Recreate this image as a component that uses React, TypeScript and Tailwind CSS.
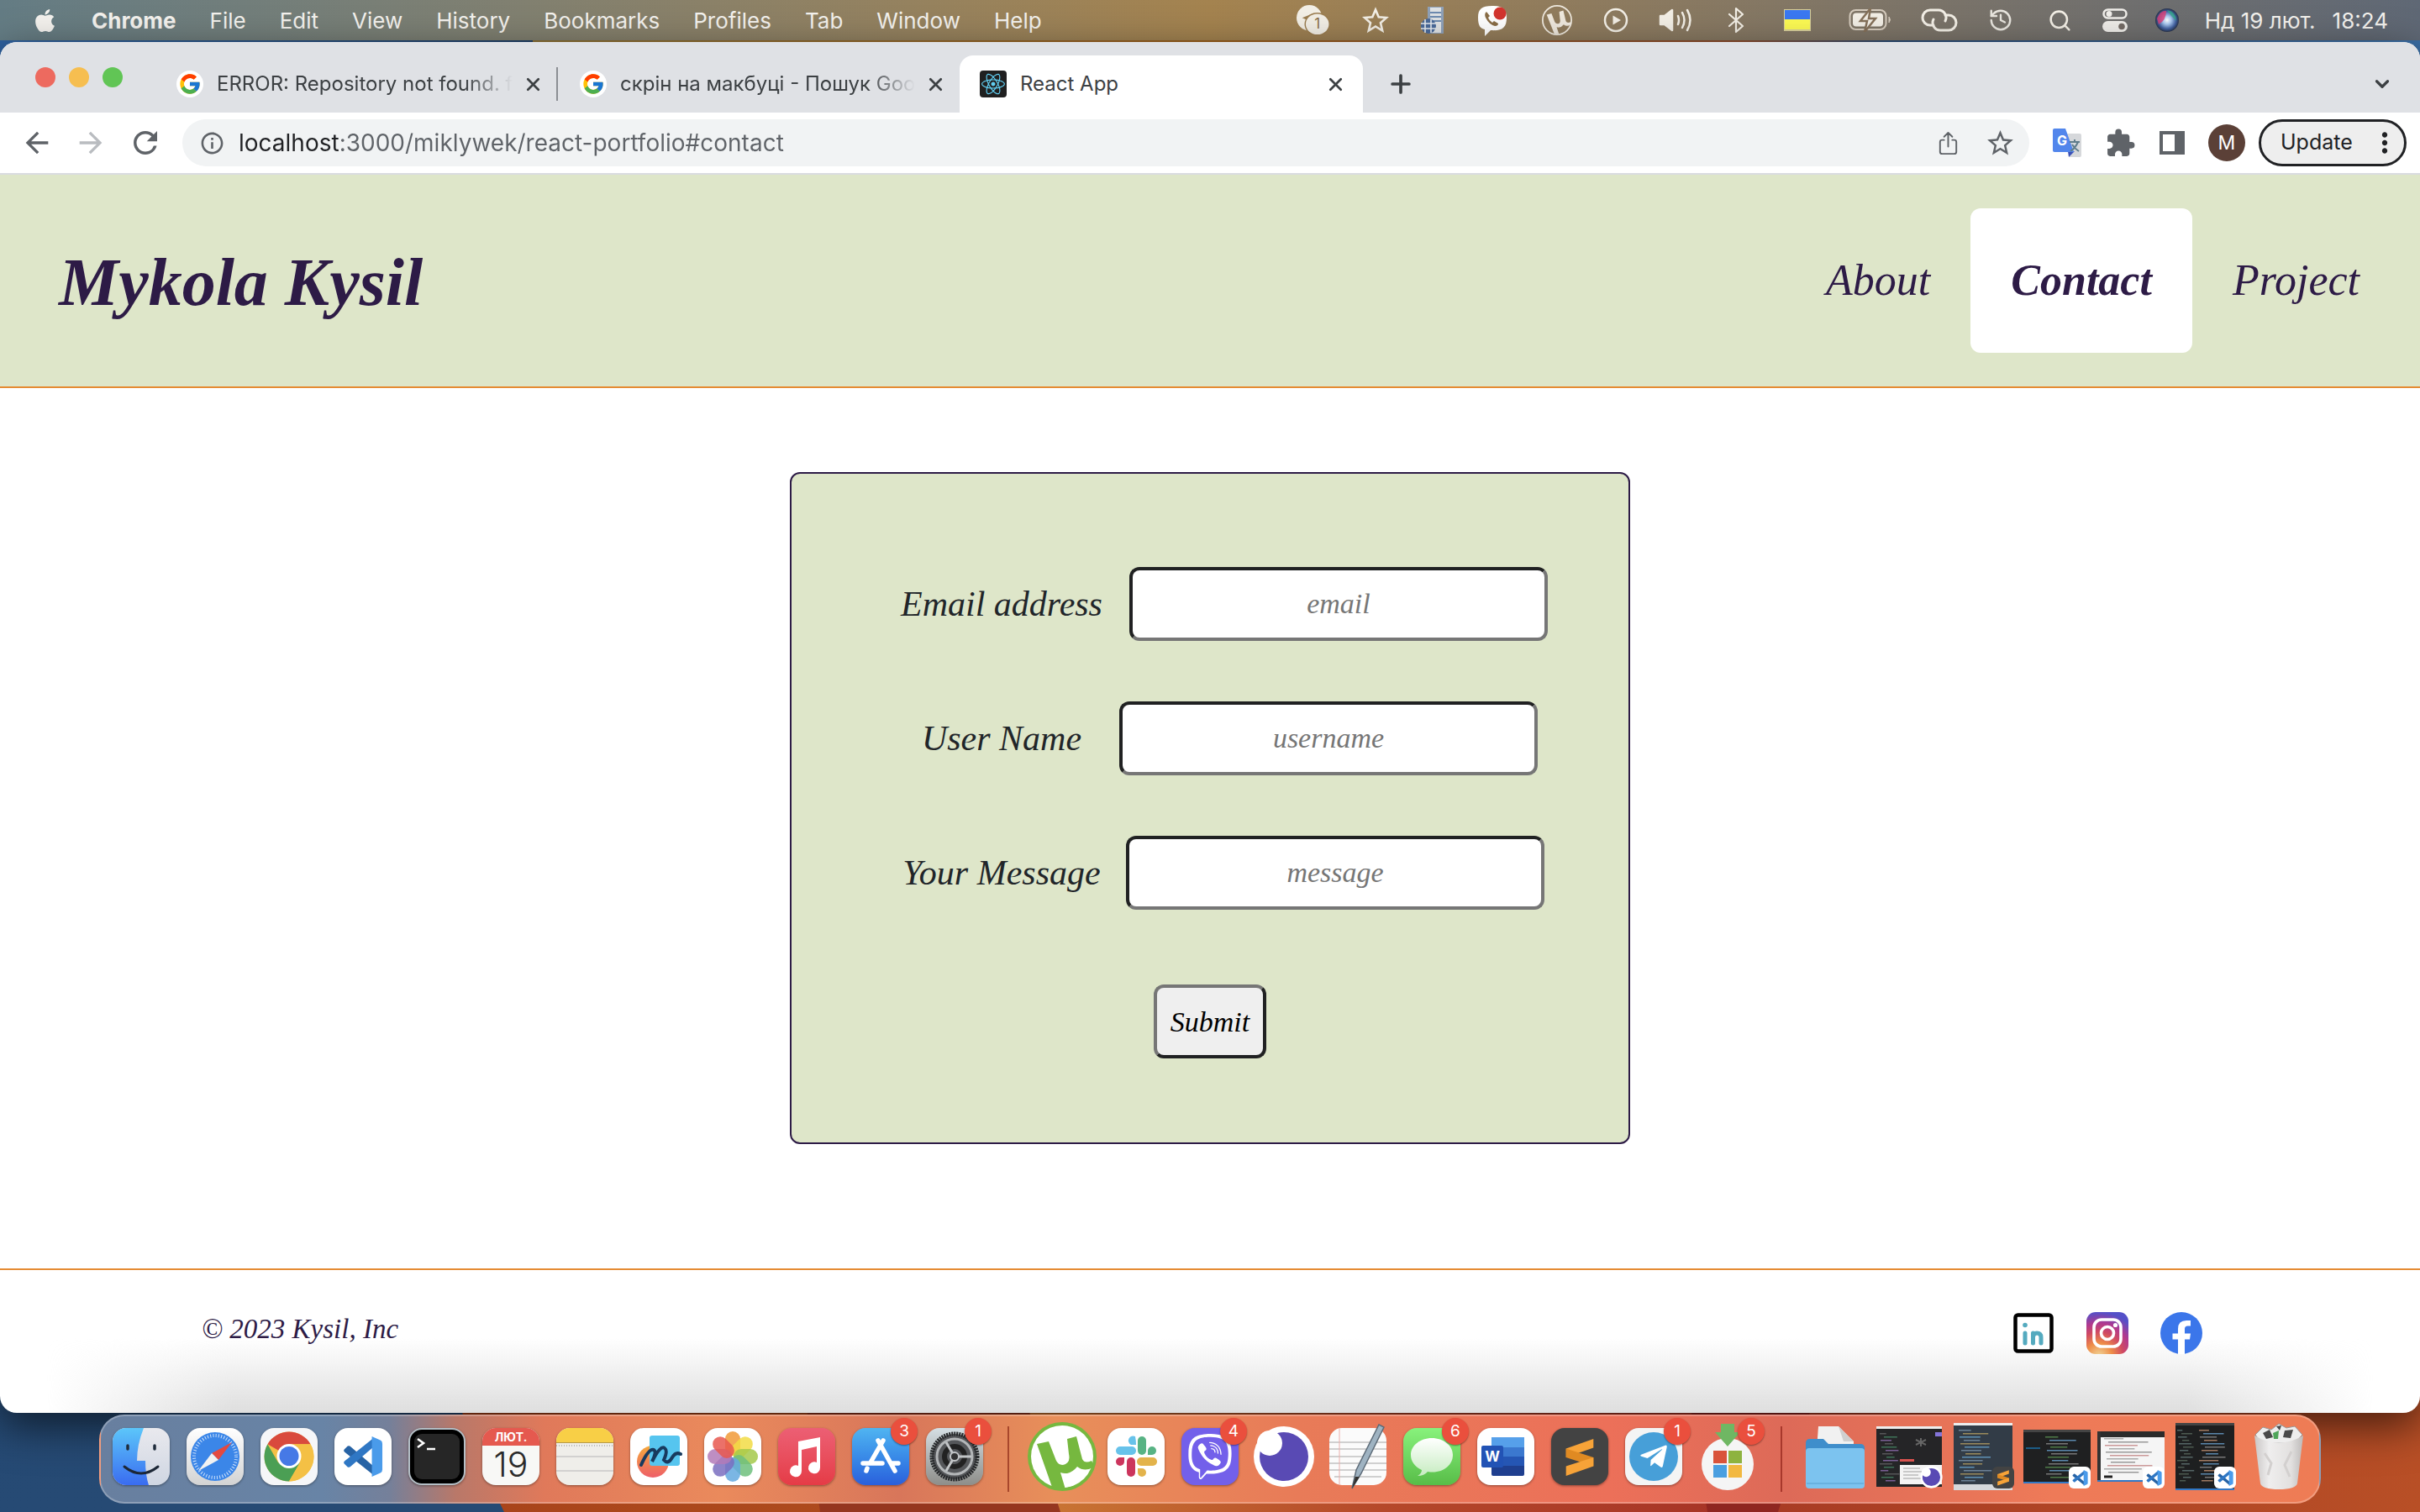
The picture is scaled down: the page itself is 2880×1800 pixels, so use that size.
import React from "react";
import { FaApple, FaViber, FaTelegramPlane, FaReact } from "react-icons/fa";
import { FcGoogle } from "react-icons/fc";
import { MdExtension, MdRefresh, MdStarOutline, MdOutlineArrowBack, MdOutlineArrowForward, MdInfoOutline, MdMoreVert } from "react-icons/md";
import { IoShareOutline } from "react-icons/io5";
import { History, Search, ChevronDown, Plus, X } from "lucide-react";

const menus = ["File", "Edit", "View", "History", "Bookmarks", "Profiles", "Tab", "Window", "Help"];

function Wallpaper() {
  return (
    <svg className="absolute inset-0 h-full w-full" viewBox="0 0 2880 1800" preserveAspectRatio="none" aria-hidden="true">
      <defs>
        <linearGradient id="wpTop" x1="0" x2="1" y1="0" y2="0">
          <stop offset="0" stopColor="#2f62a0" />
          <stop offset=".22" stopColor="#1f3f66" />
          <stop offset=".22" stopColor="#8a6f33" />
          <stop offset=".5" stopColor="#9a5e1c" />
          <stop offset=".72" stopColor="#8a4a2c" />
          <stop offset=".78" stopColor="#2b4a72" />
          <stop offset="1" stopColor="#3a6ea6" />
        </linearGradient>
        <linearGradient id="wpBlue" x1="0" x2="0" y1="0" y2="1">
          <stop offset="0" stopColor="#20466f" />
          <stop offset="1" stopColor="#264a74" />
        </linearGradient>
        <linearGradient id="wpA" x1="0" x2="1" y1="0" y2="0">
          <stop offset="0" stopColor="#a8431a" />
          <stop offset=".6" stopColor="#b95a24" />
          <stop offset="1" stopColor="#c8733a" />
        </linearGradient>
        <linearGradient id="wpB" x1="0" x2="1" y1="0" y2="0">
          <stop offset="0" stopColor="#cb7a34" />
          <stop offset=".5" stopColor="#b5482a" />
          <stop offset="1" stopColor="#a53226" />
        </linearGradient>
        <linearGradient id="wpC" x1="0" x2="1" y1="0" y2="0">
          <stop offset="0" stopColor="#a93c24" />
          <stop offset="1" stopColor="#b84f26" />
        </linearGradient>
      </defs>
      <rect width="2880" height="200" fill="url(#wpTop)" />
      <rect y="200" width="2880" height="1600" fill="url(#wpBlue)" />
      <path d="M520 1600H2880V1800H600Q570 1740 520 1600Z" fill="url(#wpA)" />
      <path d="M950 1600H1300V1800H976Z" fill="#95361f" />
      <path d="M1200 1600H2100V1800H1262Z" fill="url(#wpB)" />
      <path d="M2000 1600H2200V1800H2032Z" fill="#8f2620" />
      <path d="M2180 1600H2880V1800H2116Z" fill="url(#wpC)" />
    </svg>
  );
}

/* ---------- menu bar ---------- */

const glyph = "overflow-visible";

const statusIcons: { name: string; box: string; art: React.ReactNode }[] = [
  {
    name: "Telegram",
    box: "w-10",
    art: (
      <svg width="40" height="38" viewBox="0 0 42 40" className={glyph}>
        <circle cx="17" cy="17" r="16" fill="#f3efe6" />
        <path d="M8 17 23 11 20 25 15 20Z" fill="#9b7d50" />
        <ellipse cx="27" cy="25" rx="16" ry="14.500" fill="#9b7d50" />
        <ellipse cx="27" cy="25" rx="14.500" ry="13" fill="#f3efe6" />
        <text x="27" y="31" fontSize="18" textAnchor="middle" fill="#8b6f44">1</text>
      </svg>
    ),
  },
  {
    name: "Favourites",
    box: "w-[34px]",
    art: (
      <svg width="32" height="32" viewBox="0 0 32 32">
        <path d="M16 3.500 19.700 12.200 29 13 22 19.200 24.200 28.500 16 23.500 7.800 28.500 10 19.200 3 13 12.300 12.200Z" fill="none" stroke="#f3efe6" strokeWidth="2.600" />
      </svg>
    ),
  },
  {
    name: "Network",
    box: "w-[26px]",
    art: (
      <svg width="28" height="34" viewBox="0 0 28 34">
        <rect x="8" y="1" width="19" height="32" fill="#8fa1b8" />
        <rect x="11" y="2" width="13" height="30" fill="#dfe2e4" />
        <path d="M11 8H24M11 13H24M11 18H24" stroke="#6d8bb0" strokeWidth="2" />
        <circle cx="9" cy="24" r="9" fill="#4a6a9a" />
        <path d="M0 21H18M0 27H18M5 16V32M12 16V32" stroke="#e6ebf0" strokeWidth="1.600" />
      </svg>
    ),
  },
  {
    name: "Viber",
    box: "w-10",
    art: (
      <svg width="38" height="38" viewBox="0 0 38 38" className={glyph}>
        <path d="M19 2C6 2 2 6 2 16C2 26 5 29 10 30V38L17 31C31 32 36 28 36 16C36 6 31 2 19 2Z" fill="#fff" />
        <path d="M12 9Q9 11 11 16Q15 24 22 26Q26 26 26 23L21 20L19 22Q15 19 14 16L16 14Z" fill="#8a6d46" />
        <circle cx="28" cy="11" r="7.500" fill="#d3342e" />
      </svg>
    ),
  },
  {
    name: "Torrent client",
    box: "w-[38px]",
    art: (
      <svg width="36" height="36" viewBox="0 0 82 82">
        <circle cx="41" cy="41" r="39" fill="none" stroke="#efe9de" strokeWidth="4" />
        <path d="M13 26 26 23 35 46Q39 53 46 50Q51 47 49 38L47 18 58 15 65 44Q68 50 78 46V53Q68 60 59 53Q50 64 40 60L46 78 34 79Z" fill="#efe9de" />
      </svg>
    ),
  },
  {
    name: "Now playing",
    box: "w-[26px]",
    art: (
      <svg width="30" height="30" viewBox="0 0 30 30">
        <circle cx="15" cy="15" r="13" fill="none" stroke="#f3efe6" strokeWidth="2.500" />
        <path d="M11.500 9.500 21 15 11.500 20.500Z" fill="#f3efe6" />
      </svg>
    ),
  },
  {
    name: "Sound",
    box: "w-[42px]",
    art: (
      <svg width="42" height="30" viewBox="0 0 42 30" fill="none" stroke="#f3efe6" strokeWidth="2.500" strokeLinecap="round">
        <path d="M2 10H7L16 3V27L7 20H2Z" fill="#f3efe6" strokeLinejoin="round" />
        <path d="M23 10Q25 15 23 20M28 6Q33 15 28 24M34 3Q41 15 34 27" />
      </svg>
    ),
  },
  {
    name: "Bluetooth",
    box: "w-6",
    art: (
      <svg width="22" height="32" viewBox="0 0 22 32" fill="none" stroke="#f3efe6" strokeWidth="2.200" strokeLinejoin="round" strokeLinecap="round">
        <path d="M3 9 19 23 11 30V2L19 9 3 23" />
      </svg>
    ),
  },
  {
    name: "Ukrainian keyboard",
    box: "w-[46px]",
    art: (
      <svg width="32" height="26" viewBox="0 0 32 26">
        <rect width="32" height="26" fill="#d8cf9a" />
        <rect x="1" y="1" width="30" height="11" fill="#3a78f2" />
        <rect x="1" y="12" width="30" height="12" fill="#fdfb54" />
      </svg>
    ),
  },
  {
    name: "Battery charging",
    box: "w-[52px]",
    art: (
      <svg width="52" height="28" viewBox="0 0 52 28">
        <rect x="1.500" y="2" width="43" height="23" rx="7" fill="none" stroke="#d5cbbd" strokeWidth="2" />
        <path d="M48 10Q51 13.500 48 17Z" fill="#d5cbbd" stroke="#d5cbbd" />
        <rect x="5" y="5.500" width="36" height="16" rx="4" fill="#f3efe6" />
        <path d="M26 0 14 15H22L19 28 32 12H24Z" fill="#f3efe6" stroke="#85715a" strokeWidth="2.500" />
      </svg>
    ),
  },
  {
    name: "Connection",
    box: "w-9",
    art: (
      <svg width="44" height="28" viewBox="0 0 44 28" fill="none" stroke="#f3efe6" strokeWidth="3" strokeLinecap="round">
        <path d="M15 20H11A9 9 0 0 1 11 2H21A9 9 0 0 1 29 15" />
        <path d="M29 8H33A9 9 0 0 1 33 26H23A9 9 0 0 1 15 13" />
      </svg>
    ),
  },
  { name: "Time Machine", box: "w-[34px]", art: <History size={30} strokeWidth={1.9} color="#e9e6df" /> },
  { name: "Spotlight", box: "w-8", art: <Search size={29} strokeWidth={2.1} color="#f3efe6" /> },
  {
    name: "Control Centre",
    box: "w-[22px]",
    art: (
      <svg width="30" height="28" viewBox="0 0 30 28">
        <rect x="1.500" y="1.500" width="27" height="10" rx="5" fill="none" stroke="#f0eeea" strokeWidth="2.500" />
        <circle cx="8" cy="6.500" r="3.500" fill="#f0eeea" />
        <rect y="15" width="30" height="13" rx="6.500" fill="#f0eeea" />
        <circle cx="23" cy="21.500" r="3.800" fill="#756c66" />
      </svg>
    ),
  },
  {
    name: "Siri",
    box: "w-[26px]",
    art: (
      <svg width="28" height="28" viewBox="0 0 28 28">
        <defs>
          <radialGradient id="siri">
            <stop offset="0" stopColor="#fff" />
            <stop offset=".35" stopColor="#a9c8f0" />
            <stop offset=".75" stopColor="#41609f" />
            <stop offset="1" stopColor="#28324a" />
          </radialGradient>
        </defs>
        <circle cx="14" cy="14" r="14" fill="url(#siri)" />
        <path d="M2 12Q6 2 13 3Q13 14 4 19Z" fill="#dc3c76" opacity=".8" />
        <path d="M14 2Q25 4 25 15Q19 10 14 2Z" fill="#2fae86" opacity=".7" />
      </svg>
    ),
  },
];

function MenuBar() {
  return (
    <header className="relative mb-0.5 flex h-12 items-center justify-between bg-linear-to-r from-[#647c84] via-[#a4834f] to-[#5f6875] pr-[38px] pl-[38px] text-[26px] text-[#f4f2ee] [text-shadow:0_2px_4px_rgba(0,0,0,.3)]">
      <nav aria-label="Application menu" className="flex items-center gap-10">
        <button aria-label="Apple menu">
          <FaApple size={31} />
        </button>
        <button className="font-bold">Chrome</button>
        {menus.map((m) => (
          <button key={m}>{m}</button>
        ))}
      </nav>
      <div className="flex items-center">
        <div className="flex items-center gap-[38px]">
          {statusIcons.map((s) => (
            <button key={s.name} aria-label={s.name} className={`flex shrink-0 items-center justify-center ${s.box}`}>
              <span className="shrink-0">{s.art}</span>
            </button>
          ))}
        </div>
        <button className="ml-8 flex gap-5 whitespace-nowrap">
          <span>Нд 19 лют.</span>
          <span>18:24</span>
        </button>
      </div>
    </header>
  );
}

/* ---------- browser chrome ---------- */

function GoogleMark() {
  return (
    <span className="flex size-8 shrink-0 items-center justify-center rounded-full bg-white">
      <FcGoogle size={28} />
    </span>
  );
}

function InactiveTab({ title }: { title: string }) {
  return (
    <div className="flex w-[478px] items-center pr-4 pl-[26px]">
      <GoogleMark />
      <button role="tab" aria-selected="false" className="ml-4 flex-1 text-left whitespace-nowrap [mask-image:linear-gradient(90deg,#000_84%,transparent)]">
        {title}
      </button>
      <button aria-label={`Close ${title}`} className="ml-3">
        <X size={25} strokeWidth={2.6} />
      </button>
    </div>
  );
}

function TabStrip() {
  return (
    <div className="flex h-[84px] items-end bg-[#dfe1e5] text-[24px] text-[#3c4043]">
      <div className="flex h-[84px] items-center gap-4 pl-[42px]">
        <button aria-label="Close window" className="size-6 rounded-full bg-[#ed6a5f]" />
        <button aria-label="Minimise window" className="size-6 rounded-full bg-[#f6be50]" />
        <button aria-label="Full screen" className="size-6 rounded-full bg-[#61c555]" />
      </div>
      <div role="tablist" className="flex h-[68px] flex-1 items-stretch pl-[38px]">
        <InactiveTab title="ERROR: Repository not found. f" />
        <span className="my-auto h-10 w-0.5 bg-[#8b8e93]" />
        <InactiveTab title="скрін на макбуці - Пошук Goo" />
        <div className="flex w-[480px] items-center rounded-t-2xl bg-white pr-5 pl-6">
          <span className="flex size-8 items-center justify-center rounded bg-[#202020]">
            <FaReact size={28} color="#61cdf0" />
          </span>
          <button role="tab" aria-selected="true" className="ml-4 flex-1 text-left">React App</button>
          <button aria-label="Close React App">
            <X size={25} strokeWidth={2.6} />
          </button>
        </div>
        <button aria-label="New tab" className="ml-7">
          <Plus size={34} strokeWidth={2.6} />
        </button>
      </div>
      <button aria-label="Search tabs" className="mr-8 flex h-[68px] items-center">
        <ChevronDown size={26} strokeWidth={3} />
      </button>
    </div>
  );
}

function Toolbar() {
  return (
    <div className="flex h-[74px] items-center border-b-2 border-[#dadce0] bg-white pr-4 pl-6 text-[#5f6368]">
      <div className="flex items-center gap-6">
        <button aria-label="Back"><MdOutlineArrowBack size={40} /></button>
        <button aria-label="Forward" className="text-[#b9bcc0]"><MdOutlineArrowForward size={40} /></button>
        <button aria-label="Reload"><MdRefresh size={42} /></button>
      </div>
      <div className="ml-[23px] flex h-14 flex-1 items-center rounded-full bg-[#f1f3f4] pr-4 pl-5">
        <MdInfoOutline size={31} />
        <input
          aria-label="Address"
          defaultValue="localhost:3000/miklywek/react-portfolio#contact"
          className="ml-4 min-w-0 flex-1 bg-[linear-gradient(90deg,#202124_121px,#5f6368_121px)] bg-clip-text text-[28px] text-transparent outline-none"
        />
        <button aria-label="Share"><IoShareOutline size={31} /></button>
        <button aria-label="Bookmark this page" className="ml-7"><MdStarOutline size={37} /></button>
      </div>
      <div className="ml-7 flex items-center gap-7">
        <button aria-label="Translate">
          <svg width="34" height="34" viewBox="0 0 34 34">
            <path d="M12 6H32Q34 6 34 8V32Q34 34 32 34H20Z" fill="#d6d8db" />
            <path d="M18 27H26L19 34Z" fill="#3b51b8" />
            <path d="M2 0H15L25 28H2Q0 28 0 26V2Q0 0 2 0Z" fill="#5286ec" />
            <text x="5" y="20" fontSize="16" fontWeight="700" fill="#fff">G</text>
            <path d="M20 16H32M26 13V16M30 16Q27 23 21 27M23 19Q26 24 31 27" fill="none" stroke="#5f7d8c" strokeWidth="2" />
          </svg>
        </button>
        <button aria-label="Extensions"><MdExtension size={37} /></button>
        <button aria-label="Side panel">
          <svg width="30" height="28" viewBox="0 0 30 28">
            <path d="M0 0H30V28H0ZM4 4V24H18V4Z" fill="#5f6368" fillRule="evenodd" />
          </svg>
        </button>
        <button aria-label="Profile" className="flex size-11 items-center justify-center rounded-full bg-[#5b4037] text-[23px] text-white">M</button>
      </div>
      <button className="ml-4 flex h-14 w-44 items-center justify-between rounded-full border-[3px] border-[#202124] bg-[#eeeeee] pr-1 pl-[23px] text-[25px] text-[#202124]">
        Update
        <MdMoreVert size={38} />
      </button>
    </div>
  );
}

/* ---------- page ---------- */

function PageHeader() {
  return (
    <header className="flex items-center justify-between border-b-2 border-[#e58b33] bg-[#dee6c9] px-6 py-10 text-[#2d1b46]">
      <h1 className="pt-1 pl-[46px] text-[80px] leading-none font-bold">Mykola Kysil</h1>
      <nav className="flex items-center text-[52px] leading-[76px]">
        <a href="#about" className="rounded-xl p-12">About</a>
        <a href="#contact" className="rounded-xl bg-white p-12 font-bold">Contact</a>
        <a href="#project" className="rounded-xl p-12">Project</a>
      </nav>
    </header>
  );
}

const fields = [
  { id: "email", label: "Email address", hint: "email", gap: "ml-8" },
  { id: "username", label: "User Name", hint: "username", gap: "ml-5" },
  { id: "message", label: "Your Message", hint: "message", gap: "ml-7" },
];

function ContactForm() {
  return (
    <form className="mx-auto mt-[100px] flex h-[800px] w-[1000px] flex-col rounded-xl border-2 border-[#2d1b46] bg-[#dee6c9] pt-[111px] pl-[130px]" onSubmit={(e) => e.preventDefault()}>
      <div className="flex flex-col gap-[72px]">
        {fields.map((f) => (
          <div key={f.id} className="flex items-center">
            <label htmlFor={f.id} className="w-60 text-center text-[42px] leading-none whitespace-nowrap text-[#212529]">{f.label}</label>
            <input
              id={f.id}
              placeholder={f.hint}
              className={`h-[88px] w-[498px] rounded-xl border-4 border-t-[#202122] border-r-[#767676] border-b-[#767676] border-l-[#202122] bg-white text-center text-[34px] italic placeholder:text-[#767676] ${f.gap}`}
            />
          </div>
        ))}
      </div>
      <button className="mt-[89px] mr-[130px] h-[88px] self-center rounded-xl border-4 border-t-[#767676] border-r-[#202122] border-b-[#202122] border-l-[#767676] bg-[#efefef] px-4 text-[34px] text-black italic">
        Submit
      </button>
    </form>
  );
}

function PageFooter() {
  return (
    <footer className="relative border-t-2 border-[#e58b33] text-[#2d1b46]">
      <div className="absolute inset-x-14 bottom-0 h-[90px] bg-linear-to-t from-[#dedede] to-transparent [mask-image:linear-gradient(90deg,transparent,#000_8%,#000_92%,transparent)]" />
      <div className="relative flex h-[170px] items-start justify-between pt-[50px] pr-[259px] pl-[240px]">
        <p className="text-[33px] leading-10">© 2023 Kysil, Inc</p>
        <div className="flex items-center gap-[38px]">
          <a href="#linkedin" aria-label="LinkedIn">
            <svg width="50" height="50" viewBox="0 0 50 50">
              <rect x="3.500" y="3.500" width="43" height="43" rx="3" fill="#fff" stroke="#000" strokeWidth="4.500" />
              <g stroke="#54aabf" strokeWidth="5" strokeLinecap="round" fill="none">
                <path d="M15 25V37M24.500 25V37M24.500 30Q24.500 25 29 25Q34 25 34 30V37" />
              </g>
              <circle cx="15" cy="15.500" r="2.800" fill="#54aabf" />
            </svg>
          </a>
          <a href="#instagram" aria-label="Instagram">
            <svg width="50" height="50" viewBox="0 0 50 50">
              <defs>
                <radialGradient id="ig" cx=".3" cy="1.050" r="1.050">
                  <stop offset="0" stopColor="#f0d79a" />
                  <stop offset=".3" stopColor="#ee8d48" />
                  <stop offset=".55" stopColor="#d04a62" />
                  <stop offset=".75" stopColor="#b0398f" />
                  <stop offset="1" stopColor="#5450c8" />
                </radialGradient>
              </defs>
              <rect width="50" height="50" rx="11" fill="url(#ig)" />
              <rect x="9" y="9" width="32" height="32" rx="9" fill="none" stroke="#fff" strokeWidth="3.600" />
              <circle cx="25" cy="25" r="7.500" fill="none" stroke="#fff" strokeWidth="3.600" />
              <circle cx="34.500" cy="15.500" r="2.600" fill="#fff" />
            </svg>
          </a>
          <a href="#facebook" aria-label="Facebook">
            <svg width="50" height="50" viewBox="0 0 50 50">
              <circle cx="25" cy="25" r="25" fill="#3b76ea" />
              <path d="M21 50V32.500H14.500V25.500H21V20Q21 10 31 10H36V16.500H32.500Q29 16.500 29 20V25.500H36L35 32.500H29V50Q25 50.500 21 50Z" fill="#fff" />
            </svg>
          </a>
        </div>
      </div>
    </footer>
  );
}

/* ---------- dock ---------- */

function Tile({ className = "", children }: { className?: string; children?: React.ReactNode }) {
  return <span className={`flex size-[68px] items-center justify-center overflow-hidden rounded-2xl shadow-[0_1px_3px_rgba(0,0,0,.4)] ${className}`}>{children}</span>;
}

const art = { width: 68, height: 68, viewBox: "0 0 68 68" };

function CodeMark({ size }: { size: number }) {
  return (
    <svg width={size} height={size} viewBox="0 0 50 50">
      <path d="M2 17 6 13Q8 12 10 14L38 38V49L3 21Q0 19 2 17Z" fill="#2763a5" transform="translate(0 -1)" />
      <path d="M2 33 6 37Q8 38 10 36L38 12V1L3 29Q0 31 2 33Z" fill="#2f77c4" transform="translate(0 1)" />
      <path d="M36 0 47 5Q49 6 49 9V41Q49 44 47 45L36 50Z" fill="#4a9bea" />
    </svg>
  );
}

function SublimeMark({ size }: { size: number }) {
  return (
    <svg width={size} height={size} viewBox="0 0 50 50">
      <path d="M8 15 42 3V14L8 26Z" fill="#f7a338" />
      <path d="M8 15V26L42 37V26Z" fill="#e08a22" />
      <path d="M8 37 42 26V37L8 49Z" fill="#f7a338" />
    </svg>
  );
}

function InsomniaMark({ size }: { size: number }) {
  return (
    <svg width={size} height={size} viewBox="0 0 74 74">
      <circle cx="37" cy="37" r="36" fill="#fff" />
      <circle cx="37" cy="37" r="29" fill="#594ab4" />
      <circle cx="20" cy="21" r="15" fill="#fff" />
    </svg>
  );
}

function Lines({ colors, count, x, w }: { colors: string[]; count: number; x: number; w: number }) {
  return (
    <>
      {Array.from({ length: count }, (_, i) => (
        <rect key={i} x={x + ((i * 5) % 9)} y={8 + i * 4} width={w * (0.35 + ((i * 37) % 50) / 100)} height="1.500" fill={colors[i % colors.length]} />
      ))}
    </>
  );
}

const dockApps: { name: string; badge?: number; art: React.ReactNode }[] = [
  {
    name: "Finder",
    art: (
      <Tile className="bg-linear-to-b from-[#e9e9ee] to-[#cfd6e2]">
        <svg {...art}>
          <defs>
            <linearGradient id="fin" x1="0" x2="0" y1="0" y2="1">
              <stop offset="0" stopColor="#5cc6fa" />
              <stop offset="1" stopColor="#3a6cf0" />
            </linearGradient>
          </defs>
          <path d="M0 0H37Q29 20 29 39H39Q39 56 43 68H0Z" fill="url(#fin)" />
          <path d="M18 21V25M50 21V25" stroke="#1f2c3c" strokeWidth="3.500" strokeLinecap="round" />
          <path d="M14 46Q34 62 54 46" fill="none" stroke="#1c2736" strokeWidth="3" strokeLinecap="round" />
        </svg>
      </Tile>
    ),
  },
  {
    name: "Safari",
    art: (
      <Tile className="bg-linear-to-b from-white to-[#d3d3d3]">
        <svg {...art}>
          <circle cx="34" cy="34" r="29" fill="#3b86e8" />
          <circle cx="34" cy="34" r="25" fill="none" stroke="#cfe2fb" strokeWidth="4" strokeDasharray="1 2.270" />
          <path d="M54 17 38 38 30 30Z" fill="#e4493f" />
          <path d="M14 51 30 30 38 38Z" fill="#f2f2f2" />
        </svg>
      </Tile>
    ),
  },
  {
    name: "Chrome",
    art: (
      <Tile className="bg-[#f5f6f8]">
        <svg {...art}>
          <circle cx="34" cy="34" r="29.500" fill="#f4c045" />
          <path d="M34 34 8.500 19.200A29.500 29.500 0 0 1 59.500 19.200H34Z" fill="#d94a3d" />
          <path d="M8.500 19.200A29.500 29.500 0 0 0 34 63.500L46.800 41.400 34 34 21.200 41.400Z" fill="#4b9f54" />
          <path d="M59.500 19.200H34V34L46.800 41.400 34 63.500A29.500 29.500 0 0 0 59.500 19.200Z" fill="#f4c045" />
          <circle cx="34" cy="33.500" r="14.500" fill="#fff" />
          <circle cx="34" cy="33.500" r="11.500" fill="#4679e6" />
        </svg>
      </Tile>
    ),
  },
  { name: "Visual Studio Code", art: <Tile className="bg-white"><CodeMark size={48} /></Tile> },
  {
    name: "Terminal",
    art: (
      <Tile className="border-2 border-[#b4bfc6] bg-black">
        <svg {...art} className="shrink-0">
          <rect x="7" y="7" width="54" height="54" rx="9" fill="#262626" />
          <path d="M11 13 18 18 11 23M22 25H32" fill="none" stroke="#fff" strokeWidth="2.600" />
        </svg>
      </Tile>
    ),
  },
  {
    name: "Calendar",
    art: (
      <Tile className="flex-col justify-start bg-[#f8f8f6]">
        <span className="w-full bg-[#e5594f] text-center text-[14px] leading-[21px] font-bold text-white">ЛЮТ.</span>
        <span className="text-[41px] leading-[44px] font-light text-[#2b2b2b]">19</span>
      </Tile>
    ),
  },
  {
    name: "Notes",
    art: (
      <Tile>
        <svg {...art}>
          <rect width="68" height="68" fill="#efeeea" />
          <rect width="68" height="17" fill="#f8cf46" />
          <path d="M0 17.500H68" stroke="#b59a4a" />
          <path d="M0 21H68" stroke="#bbb" strokeWidth="2" strokeDasharray="1 2" />
          <path d="M0 34H68M0 51H68" stroke="#d2d1d0" strokeWidth="2" />
        </svg>
      </Tile>
    ),
  },
  {
    name: "Freeform",
    art: (
      <Tile className="bg-white">
        <svg {...art}>
          <defs>
            <linearGradient id="ff" x1="0" x2="0" y1="0" y2="1">
              <stop offset="0" stopColor="#f5a93c" />
              <stop offset="1" stopColor="#ee5f68" />
            </linearGradient>
          </defs>
          <circle cx="27" cy="40" r="19" fill="url(#ff)" />
          <rect x="23" y="9" width="36" height="36" rx="3" fill="#56c5ef" />
          <path d="M13 44Q22 24 28 26Q32 28 26 40Q36 20 41 24Q45 27 40 38Q45 44 50 35Q54 28 60 31" fill="none" stroke="#183a5e" strokeWidth="4" strokeLinecap="round" />
        </svg>
      </Tile>
    ),
  },
  {
    name: "Photos",
    art: (
      <Tile className="bg-white">
        <svg {...art}>
          {["#f19a37", "#f2dc45", "#a4c94a", "#6fbf7c", "#64a9df", "#7a6fc0", "#b37ab8", "#e8584f"].map((c, i) => (
            <rect key={c} x="25" y="4" width="18" height="29" rx="9" fill={c} opacity=".85" transform={`rotate(${i * 45} 34 34)`} />
          ))}
        </svg>
      </Tile>
    ),
  },
  {
    name: "Music",
    art: (
      <Tile className="bg-linear-to-b from-[#ec5f74] to-[#e53b46]">
        <svg {...art} fill="#fff">
          <path d="M24 16 50 11V47A7 7 0 1 1 46 41V22L28 26V51A7 7 0 1 1 24 45Z" />
        </svg>
      </Tile>
    ),
  },
  {
    name: "App Store",
    badge: 3,
    art: (
      <Tile className="bg-linear-to-b from-[#50b4f1] to-[#2b5fdc]">
        <svg {...art} fill="none" stroke="#fff" strokeWidth="5.500" strokeLinecap="round">
          <path d="M37 15 22 41M31 15 51 51M13 42H36M47 42H55M18 48 17 51" />
        </svg>
      </Tile>
    ),
  },
  {
    name: "System Settings",
    badge: 1,
    art: (
      <Tile className="bg-linear-to-b from-[#d5dfe4] to-[#8e8e8a]">
        <svg {...art} fill="none">
          <circle cx="34" cy="34" r="27" fill="#55575a" stroke="#26282a" strokeWidth="5" strokeDasharray="2 1" />
          <circle cx="34" cy="34" r="21" stroke="#b3b6b8" strokeWidth="3" />
          <circle cx="34" cy="34" r="12" stroke="#222" strokeWidth="6" />
          <path d="M34 34H54M34 34 24 17M34 34 24 51" stroke="#c2c5c7" strokeWidth="3" />
          <circle cx="34" cy="34" r="5" fill="#333" stroke="#c2c5c7" strokeWidth="2" />
        </svg>
      </Tile>
    ),
  },
];

const dockUserApps: { name: string; badge?: number; art: React.ReactNode }[] = [
  {
    name: "Torrent",
    art: (
      <svg width="82" height="82" viewBox="0 0 82 82">
        <defs>
          <clipPath id="utc"><circle cx="41" cy="41" r="38" /></clipPath>
        </defs>
        <circle cx="41" cy="41" r="41" fill="#76b83f" />
        <circle cx="41" cy="41" r="37" fill="#fff" />
        <g clipPath="url(#utc)" fill="#76b83f">
          <path d="M11 26 25 23 34 46Q38 53 45 50Q51 47 49 38L47 20 58 17 65 44Q68 50 76 46L80 53Q68 60 59 53Q50 64 39 60L45 80H30Z" />
        </g>
      </svg>
    ),
  },
  {
    name: "Slack",
    art: (
      <Tile className="bg-white">
        <svg {...art}>
          <g fill="#67c2ea"><rect x="10" y="22" width="24" height="10" rx="5" /><path d="M34 20H28A5 5 0 1 1 33 10Q34 15 34 20Z" /></g>
          <g fill="#58b384"><rect x="36" y="10" width="10" height="22" rx="5" /><path d="M48 32V27A5 5 0 1 1 53 32Z" /></g>
          <g fill="#e3b34b"><rect x="35" y="35" width="24" height="10" rx="5" /><path d="M36 48H41A5 5 0 1 1 36 53Z" /></g>
          <g fill="#cc355d"><rect x="23" y="35" width="10" height="23" rx="5" /><path d="M20 35V40A5 5 0 1 1 15 35Z" /></g>
        </svg>
      </Tile>
    ),
  },
  { name: "Viber", badge: 4, art: <Tile className="bg-[#7360ea]"><FaViber size={54} color="#fff" /></Tile> },
  { name: "Insomnia", art: <InsomniaMark size={74} /> },
  {
    name: "TextEdit",
    art: (
      <svg width="68" height="84" viewBox="0 0 68 84">
        <rect y="8" width="68" height="68" rx="15" fill="#fbfbfb" />
        <path d="M0 25H68M0 33H68M0 42H68M0 50H68M0 58H68M6 66H62" stroke="#c2c2c2" strokeWidth="1.500" />
        <path d="M12 8V76" stroke="#ecb0ac" />
        <path d="M59 4 65 7 38 62 27 80 32 58Z" fill="#9fb3c2" stroke="#5d6b78" strokeWidth="1.500" />
        <path d="M31 66 36 66 27 80Z" fill="#33312f" />
      </svg>
    ),
  },
  {
    name: "Messages",
    badge: 6,
    art: (
      <Tile className="bg-linear-to-b from-[#88f27c] to-[#58bd48]">
        <svg {...art}>
          <defs>
            <linearGradient id="msg" x1="0" x2="0" y1="0" y2="1">
              <stop offset="0" stopColor="#fff" />
              <stop offset="1" stopColor="#c6ecc0" />
            </linearGradient>
          </defs>
          <path d="M34 12C20 12 9 21 9 32C9 40 14 46 22 50Q22 54 17 57Q25 57 29 52C46 55 59 45 59 32C59 21 48 12 34 12Z" fill="url(#msg)" />
        </svg>
      </Tile>
    ),
  },
  {
    name: "Word",
    art: (
      <Tile className="bg-white">
        <svg {...art}>
          <rect x="17" y="11" width="39" height="46" rx="2" fill="#1f3f8f" />
          <rect x="17" y="11" width="39" height="12" fill="#56a0ea" />
          <rect x="17" y="23" width="39" height="11" fill="#3b78cf" />
          <rect x="17" y="34" width="39" height="11" fill="#2556b4" />
          <rect x="5" y="21" width="26" height="26" rx="2" fill="#2253b5" />
          <text x="18" y="40" textAnchor="middle" fontSize="17" fontWeight="700" fill="#fff">W</text>
        </svg>
      </Tile>
    ),
  },
  { name: "Sublime Text", art: <Tile className="bg-[#434343]"><SublimeMark size={48} /></Tile> },
  {
    name: "Telegram",
    badge: 1,
    art: (
      <Tile className="bg-[#f4f4f4]">
        <span className="flex size-[58px] items-center justify-center rounded-full bg-[#479fd8]">
          <FaTelegramPlane size={36} color="#fff" />
        </span>
      </Tile>
    ),
  },
  {
    name: "Microsoft installer",
    badge: 5,
    art: (
      <svg width="64" height="82" viewBox="0 0 64 82">
        <circle cx="32" cy="50" r="31" fill="#f5f5f5" />
        <rect x="15" y="34" width="16" height="15" fill="#d9533a" />
        <rect x="33" y="34" width="16" height="15" fill="#8eb33f" />
        <rect x="15" y="51" width="16" height="15" fill="#4a9fe0" />
        <rect x="33" y="51" width="16" height="15" fill="#f2b840" />
        <path d="M24 2H40V12H47L32 29 17 12H24Z" fill="#6fb763" />
      </svg>
    ),
  },
];

const dockWindows: { name: string; art: React.ReactNode }[] = [
  {
    name: "Documents",
    art: (
      <svg width="72" height="76" viewBox="0 0 72 76">
        <path d="M16 2H40L58 20V30H14Z" fill="#f1f1f1" />
        <path d="M40 2 58 20H46Z" fill="#cfcfcf" />
        <path d="M1 22Q1 17 6 17H22L28 23H66Q71 23 71 28V40H1Z" fill="#3f8ecb" />
        <rect x="1" y="28" width="70" height="48" rx="4" fill="#7cc3ef" />
        <path d="M2 70H70" stroke="#69b1df" strokeWidth="2" />
      </svg>
    ),
  },
  {
    name: "Insomnia window",
    art: (
      <span className="relative block">
        <svg width="78" height="72" viewBox="0 0 78 72">
          <rect width="78" height="72" fill="#252527" />
          <rect width="78" height="3" fill="#eee" />
          <Lines colors={["#565658", "#3f7358", "#7a5f95"]} count={15} x={4} w={22} />
          <path d="M53 14V24M47 16 59 22M47 22 59 16" stroke="#666" strokeWidth="2" />
          <rect x="28" y="39" width="17" height="3" fill="#d9534f" />
          <rect x="70" y="7" width="8" height="5" fill="#8374d8" />
          <rect x="28" y="46" width="50" height="23" fill="#f4f4f4" />
          <path d="M32 50H52M32 54H56M32 58H50M32 62H54" stroke="#bbb" strokeWidth="1.500" />
        </svg>
        <span className="absolute -right-px -bottom-0.5"><InsomniaMark size={27} /></span>
      </span>
    ),
  },
  {
    name: "Sublime window",
    art: (
      <span className="relative block">
        <svg width="70" height="80" viewBox="0 0 70 80">
          <rect width="70" height="80" fill="#323c47" />
          <rect width="70" height="3" fill="#eee" />
          <rect y="73" width="70" height="7" fill="#d5d8db" />
          <Lines colors={["#6c8196", "#9a8a5c", "#5f91b5"]} count={16} x={6} w={42} />
        </svg>
        <span className="absolute -right-0.5 bottom-0.5 flex size-[26px] items-center justify-center rounded-md bg-[#434343]"><SublimeMark size={20} /></span>
      </span>
    ),
  },
  {
    name: "Code window",
    art: (
      <span className="relative block">
        <svg width="80" height="64" viewBox="0 0 80 64">
          <rect width="80" height="64" fill="#1f2021" />
          <rect width="80" height="3" fill="#444" />
          <rect y="62" width="80" height="2" fill="#3178c6" />
          <path d="M3 22H20" stroke="#1c5c86" strokeWidth="2" />
          <Lines colors={["#4f7a48", "#5a87ac", "#777"]} count={13} x={26} w={44} />
        </svg>
        <span className="absolute right-0 -bottom-1.5 flex size-[26px] items-center justify-center rounded-md bg-white"><CodeMark size={19} /></span>
      </span>
    ),
  },
  {
    name: "Code document",
    art: (
      <span className="relative block">
        <svg width="80" height="60" viewBox="0 0 80 60">
          <rect width="80" height="60" fill="#f5f5f5" />
          <rect width="80" height="7" fill="#2b2b2b" />
          <rect width="4" height="60" fill="#333" />
          <rect y="58" width="80" height="2" fill="#3178c6" />
          <Lines colors={["#aaa", "#999", "#c99"]} count={11} x={8} w={66} />
          <path d="M8 54H18" stroke="#222" strokeWidth="3" />
        </svg>
        <span className="absolute right-0 -bottom-2 flex size-[26px] items-center justify-center rounded-md bg-white"><CodeMark size={19} /></span>
      </span>
    ),
  },
  {
    name: "Second code window",
    art: (
      <span className="relative block">
        <svg width="70" height="80" viewBox="0 0 70 80">
          <rect width="70" height="80" fill="#1e1f20" />
          <rect width="70" height="3" fill="#444" />
          <rect y="78" width="70" height="2" fill="#3178c6" />
          <Lines colors={["#566", "#4d5a50"]} count={16} x={2} w={18} />
          <Lines colors={["#a07a62", "#5a87ac", "#777"]} count={16} x={28} w={34} />
        </svg>
        <span className="absolute -right-0.5 bottom-0.5 flex size-[26px] items-center justify-center rounded-md bg-white"><CodeMark size={19} /></span>
      </span>
    ),
  },
  {
    name: "Bin",
    art: (
      <svg width="62" height="80" viewBox="0 0 62 80">
        <defs>
          <linearGradient id="bin" x1="0" x2="1" y1="0" y2="0">
            <stop offset="0" stopColor="#c9c6c5" />
            <stop offset=".3" stopColor="#efeeee" />
            <stop offset=".75" stopColor="#e2e0df" />
            <stop offset="1" stopColor="#bdbab9" />
          </linearGradient>
        </defs>
        <path d="M3 14 12 5 22 8 31 1 40 6 50 4 59 14 50 24H10Z" fill="#eee" stroke="#999" />
        <path d="M12 12 20 8 24 17 16 19ZM38 9 48 8 45 18 36 17ZM28 4 34 3 32 9Z" fill="#4a4a4a" />
        <path d="M24 12 31 9 30 19 25 19Z" fill="#4fa55a" />
        <path d="M2 15Q31 32 60 15L53 72Q51 79 31 79Q11 79 9 72Z" fill="url(#bin)" />
        <path d="M14 36 22 48 18 62M46 34 38 50 44 64" fill="none" stroke="#d3d0cf" strokeWidth="3" />
      </svg>
    ),
  },
];

function DockItem({ name, badge, art: icon }: { name: string; badge?: number; art: React.ReactNode }) {
  return (
    <button aria-label={name} className="relative flex h-[84px] w-[88px] items-center justify-center">
      {icon}
      {badge !== undefined && (
        <span className="absolute -top-1 right-0 flex size-8 items-center justify-center rounded-full bg-[#ea4f3d] text-[19px] text-white shadow-[0_1px_2px_rgba(0,0,0,.4)]">{badge}</span>
      )}
    </button>
  );
}

function Dock() {
  return (
    <nav aria-label="Dock" className="relative mx-auto mt-0.5 mb-2.5 flex h-[106px] items-start rounded-[30px] border-2 border-white/25 bg-[linear-gradient(90deg,#687f9f_0%,#6884a6_10%,#75809a_13%,#b97869_16%,#e0795a_20%,#ea8a5c_28%,#d8765a_36%,#e88f5a_43%,#e87b58_54%,#ec7059_68%,#dd6a58_76%,#ee7a58_88%,#ee7c55_100%)] px-1 pt-[6px]">
      {dockApps.map((a) => <DockItem key={a.name} {...a} />)}
      <span className="mx-[19px] mt-1.5 h-[78px] w-0.5 bg-[#a8472c]" />
      {dockUserApps.map((a) => <DockItem key={a.name} {...a} />)}
      <span className="mx-[19px] mt-1.5 h-[78px] w-0.5 bg-[#a8382c]" />
      {dockWindows.map((a) => <DockItem key={a.name} {...a} />)}
    </nav>
  );
}

export default function App() {
  return (
    <div className="relative flex min-h-screen flex-col overflow-hidden font-['Inter','Liberation_Sans',sans-serif]">
      <Wallpaper />
      <MenuBar />
      <div className="relative flex flex-1 flex-col overflow-hidden rounded-[20px] bg-white shadow-[0_16px_50px_rgba(0,0,0,.6)]">
        <TabStrip />
        <Toolbar />
        <div className="flex flex-1 flex-col font-['Liberation_Serif',serif] italic">
          <PageHeader />
          <main className="flex-1">
            <ContactForm />
          </main>
          <PageFooter />
        </div>
      </div>
      <Dock />
    </div>
  );
}
